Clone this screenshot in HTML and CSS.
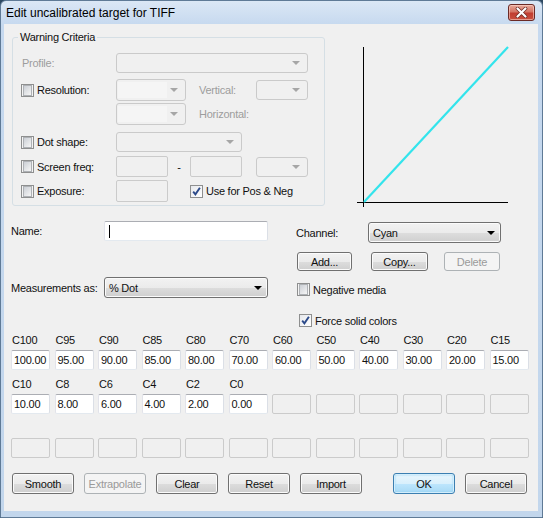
FILE: index.html
```html
<!DOCTYPE html>
<html>
<head>
<meta charset="utf-8">
<title>Edit uncalibrated target for TIFF</title>
<link rel="stylesheet" href="styles.css">
</head>
<body>
<div class="window">
  <div class="titlebar">
    <span class="title">Edit uncalibrated target for TIFF</span>
    <div class="close">
      <svg width="17" height="11" viewBox="0 0 17 11"><path d="M4.5 1.5 L12.5 9.5 M12.5 1.5 L4.5 9.5" stroke="#6a2620" stroke-width="3.6" stroke-linecap="round"/><path d="M4.5 1.5 L12.5 9.5 M12.5 1.5 L4.5 9.5" stroke="#ffffff" stroke-width="2.2" stroke-linecap="round"/></svg>
    </div>
  </div>
  <div class="client">
    <div class="top">
      <fieldset class="group">
        <legend>Warning Criteria</legend>
        <div class="row r1">
          <span class="lab dis plain">Profile:</span>
          <span class="combo w192"><i class="arr"></i></span>
        </div>
        <div class="row r2">
          <span class="lab"><span class="cb"></span><span class="cbt">Resolution:</span></span>
          <span class="combo ecombo w70"><span class="einner"></span><i class="arr"></i></span>
          <span class="sub dis">Vertical:</span>
          <span class="combo w52"><i class="arr"></i></span>
        </div>
        <div class="row r3">
          <span class="lab"></span>
          <span class="combo ecombo w70"><span class="einner"></span><i class="arr"></i></span>
          <span class="sub dis">Horizontal:</span>
        </div>
        <div class="row r4">
          <span class="lab"><span class="cb"></span><span class="cbt">Dot shape:</span></span>
          <span class="combo w126"><i class="arr"></i></span>
        </div>
        <div class="row r5">
          <span class="lab"><span class="cb"></span><span class="cbt">Screen freq:</span></span>
          <span class="dedit w52"></span>
          <span class="dash">-</span>
          <span class="dedit w52"></span>
          <span class="combo w52 gapl"><i class="arr"></i></span>
        </div>
        <div class="row r6">
          <span class="lab"><span class="cb"></span><span class="cbt">Exposure:</span></span>
          <span class="dedit w52"></span>
          <span class="cb checked posneg"><svg width="11" height="11" viewBox="0 0 11 11"><path d="M2.2 5.6 L4.4 8.3 L8.9 1.8" fill="none" stroke="#2c4a8a" stroke-width="1.9"/></svg></span>
          <span class="cbt">Use for Pos &amp; Neg</span>
        </div>
      </fieldset>
      <svg class="graph" width="170" height="167" viewBox="0 0 170 167">
        <line x1="13.5" y1="7" x2="13.5" y2="167" stroke="#000" stroke-width="1"/>
        <line x1="7" y1="162.5" x2="158" y2="162.5" stroke="#000" stroke-width="1"/>
        <line x1="14" y1="162" x2="158" y2="7" stroke="#33e4ec" stroke-width="2.2"/>
      </svg>
    </div>

    <div class="mid">
      <div class="midleft">
        <div class="frow">
          <span class="flab">Name:</span>
          <span class="edit w164"><span class="caret"></span></span>
        </div>
        <div class="frow meas">
          <span class="flab">Measurements as:</span>
          <span class="select w164"><span class="seltext">% Dot</span><i class="barr"></i></span>
        </div>
      </div>
      <div class="midright">
        <div class="frow">
          <span class="clab">Channel:</span>
          <span class="select w133"><span class="seltext">Cyan</span><i class="barr"></i></span>
        </div>
        <div class="brow">
          <span class="btn sm add">Add...</span>
          <span class="btn sm copy">Copy...</span>
          <span class="btn sm del disabled">Delete</span>
        </div>
        <div class="crow neg">
          <span class="cb"></span><span class="cbt">Negative media</span>
        </div>
        <div class="crow force">
          <span class="cb checked"><svg width="11" height="11" viewBox="0 0 11 11"><path d="M2.2 5.6 L4.4 8.3 L8.9 1.8" fill="none" stroke="#2c4a8a" stroke-width="1.9"/></svg></span><span class="cbt">Force solid colors</span>
        </div>
      </div>
    </div>

    <div class="grid">
      <div class="cell"><span class="cl">C100</span><span class="edit">100.00</span></div>
      <div class="cell"><span class="cl">C95</span><span class="edit">95.00</span></div>
      <div class="cell"><span class="cl">C90</span><span class="edit">90.00</span></div>
      <div class="cell"><span class="cl">C85</span><span class="edit">85.00</span></div>
      <div class="cell"><span class="cl">C80</span><span class="edit">80.00</span></div>
      <div class="cell"><span class="cl">C70</span><span class="edit">70.00</span></div>
      <div class="cell"><span class="cl">C60</span><span class="edit">60.00</span></div>
      <div class="cell"><span class="cl">C50</span><span class="edit">50.00</span></div>
      <div class="cell"><span class="cl">C40</span><span class="edit">40.00</span></div>
      <div class="cell"><span class="cl">C30</span><span class="edit">30.00</span></div>
      <div class="cell"><span class="cl">C20</span><span class="edit">20.00</span></div>
      <div class="cell"><span class="cl">C15</span><span class="edit">15.00</span></div>

      <div class="cell"><span class="cl">C10</span><span class="edit">10.00</span></div>
      <div class="cell"><span class="cl">C8</span><span class="edit">8.00</span></div>
      <div class="cell"><span class="cl">C6</span><span class="edit">6.00</span></div>
      <div class="cell"><span class="cl">C4</span><span class="edit">4.00</span></div>
      <div class="cell"><span class="cl">C2</span><span class="edit">2.00</span></div>
      <div class="cell"><span class="cl">C0</span><span class="edit">0.00</span></div>
      <div class="cell"><span class="cl"></span><span class="dedit"></span></div>
      <div class="cell"><span class="cl"></span><span class="dedit"></span></div>
      <div class="cell"><span class="cl"></span><span class="dedit"></span></div>
      <div class="cell"><span class="cl"></span><span class="dedit"></span></div>
      <div class="cell"><span class="cl"></span><span class="dedit"></span></div>
      <div class="cell"><span class="cl"></span><span class="dedit"></span></div>

      <div class="cell"><span class="cl"></span><span class="dedit"></span></div>
      <div class="cell"><span class="cl"></span><span class="dedit"></span></div>
      <div class="cell"><span class="cl"></span><span class="dedit"></span></div>
      <div class="cell"><span class="cl"></span><span class="dedit"></span></div>
      <div class="cell"><span class="cl"></span><span class="dedit"></span></div>
      <div class="cell"><span class="cl"></span><span class="dedit"></span></div>
      <div class="cell"><span class="cl"></span><span class="dedit"></span></div>
      <div class="cell"><span class="cl"></span><span class="dedit"></span></div>
      <div class="cell"><span class="cl"></span><span class="dedit"></span></div>
      <div class="cell"><span class="cl"></span><span class="dedit"></span></div>
      <div class="cell"><span class="cl"></span><span class="dedit"></span></div>
      <div class="cell"><span class="cl"></span><span class="dedit"></span></div>
    </div>

    <div class="btnrow">
      <span class="btn">Smooth</span>
      <span class="btn disabled">Extrapolate</span>
      <span class="btn">Clear</span>
      <span class="btn">Reset</span>
      <span class="btn">Import</span>
      <span class="btn ok">OK</span>
      <span class="btn">Cancel</span>
    </div>
  </div>
</div>
</body>
</html>
```
FILE: styles.css
```css
* { box-sizing: border-box; }
html, body { margin: 0; padding: 0; }
body {
  width: 543px; height: 518px; overflow: hidden;
  font-family: "Liberation Sans", Arial, sans-serif;
  font-size: 11px; color: #111; letter-spacing: -0.25px;
  background: #2f4a63;
}
.window {
  width: 543px; height: 518px;
  display: flex; flex-direction: column;
  padding: 0 4px 6px 3px;
  border: 1px solid #5f7a96;
  border-radius: 6px 6px 0 0;
  background: linear-gradient(#dbe7f5, #c6d9ef 24px, #c2d6ec);
}
.titlebar {
  height: 23px; flex: none;
  display: flex; align-items: flex-start; justify-content: space-between;
}
.title {
  font-size: 12px; letter-spacing: 0; line-height: 14px;
  margin: 5px 0 0 2px; color: #000;
}
.close {
  width: 27px; height: 17px; margin: 3px 3px 0 0;
  border: 1px solid #6b2a26; border-radius: 3px;
  background: linear-gradient(#e8a99b, #d47565 45%, #c13d30 55%, #c9503f);
  box-shadow: inset 0 0 0 1px rgba(255,220,210,0.55);
  display: flex; align-items: center; justify-content: center;
}
.client {
  flex: 1; background: #f0f0f0;
  padding: 7px 0 0 7px;
  display: flex; flex-direction: column;
}
.top { display: flex; height: 176px; flex: none; }
.group {
  margin: 0 0 0 1px; width: 313px; min-width: 0;
  border: 1px solid #d5dfe5; border-radius: 3px;
  padding: 9px 0 3px 8px;
  align-self: flex-start;
}
.group legend { padding: 0 2px; margin-left: -3px; line-height: 13px; }
.row { display: flex; align-items: center; }
.r1 { height: 20px; }
.r2 { height: 22px; margin-top: 6px; }
.r3 { height: 22px; margin-top: 2px; }
.r4 { height: 20px; margin-top: 7px; }
.r5 { height: 21px; margin-top: 4px; }
.r6 { height: 22px; margin-top: 3px; }
.lab { width: 95px; flex: none; display: flex; align-items: center; }
.lab.plain { padding-left: 1px; }
.dis { color: #9d9d9d; }
.sub { margin-left: 13px; width: 57px; flex: none; }
.cb {
  width: 13px; height: 13px; flex: none;
  border: 1px solid #8e8f8f; background: #f4f4f4; padding: 1px;
  display: inline-flex; align-items: center; justify-content: center;
}
.cb::before {
  content: ""; display: block; width: 9px; height: 9px;
  border: 1px solid #aeb1b5;
  background: linear-gradient(135deg, #cbcfd5, #f6f6f6);
}
.cb.checked { padding: 0; background: linear-gradient(135deg, #e6e8ec, #ffffff); }
.cb.checked::before { display: none; }
.cbt { margin-left: 3px; white-space: nowrap; }
.posneg { margin-left: 22px; }
.posneg + .cbt { margin-left: 3px; }

.combo {
  height: 20px; flex: none; position: relative;
  border: 1px solid #cacaca; border-radius: 3px; background: #f0f0f0;
  display: flex; align-items: center; justify-content: flex-end;
}
.combo.ecombo { height: 22px; justify-content: space-between; padding-left: 1px; }
.einner { width: 49px; height: 16px; background: #f5f5f5; }
.arr {
  width: 0; height: 0; margin-right: 7px;
  border-left: 4px solid transparent; border-right: 4px solid transparent;
  border-top: 4px solid #a6a6a6;
}
.w192 { width: 192px; }
.w126 { width: 126px; }
.w70 { width: 70px; }
.w52 { width: 52px; }
.w164 { width: 164px; }
.w133 { width: 133px; }
.gapl { margin-left: 14px; }
.dash { width: 22px; text-align: center; flex: none; }
.dedit {
  height: 20px; flex: none;
  border: 1px solid #cbcbcb; border-radius: 2px; background: #f0f0f0;
}
.r5 .dedit { height: 21px; }
.r6 .dedit { height: 22px; }

.graph { margin: 9px 0 0 25px; flex: none; }

.mid { display: flex; flex: none; }
.midleft { width: 257px; padding-top: 14px; flex: none; }
.midright { width: 206px; margin-left: 28px; padding-top: 15px; flex: none; }
.frow { display: flex; align-items: center; }
.meas { margin-top: 36px; }
.flab { width: 93px; flex: none; }
.clab { width: 72px; flex: none; }
.edit {
  height: 20px; display: flex; align-items: center; padding-left: 2px;
  background: #fff; border: 1px solid; border-radius: 2px;
  border-color: #abadb3 #dbdfe6 #e3e9ef #e2e3ea;
  white-space: nowrap; overflow: hidden;
}
.caret { width: 1px; height: 13px; background: #000; margin-left: 2px; }
.select {
  height: 21px; flex: none; display: flex; align-items: center; justify-content: space-between;
  border: 1px solid #707070; border-radius: 3px;
  background: linear-gradient(#f2f2f2, #ebebeb 50%, #dddddd 51%, #cfcfcf);
  box-shadow: inset 0 0 0 1px #fbfbfb;
  padding-left: 4px;
}
.barr {
  width: 0; height: 0; margin-right: 5px;
  border-left: 4px solid transparent; border-right: 4px solid transparent;
  border-top: 4px solid #000;
}
.brow { display: flex; margin-top: 9px; }
.btn {
  height: 21px; width: 62px; flex: none;
  display: flex; align-items: center; justify-content: center;
  border: 1px solid #707070; border-radius: 3px;
  background: linear-gradient(#f2f2f2, #ebebeb 50%, #dddddd 51%, #cfcfcf);
  box-shadow: inset 0 0 0 1px #fbfbfb;
  white-space: nowrap;
}
.btn.sm { height: 19px; }
.add { width: 55px; margin-left: 1px; }
.copy { width: 57px; margin-left: 19px; }
.del { width: 56px; margin-left: 16px; }
.btn.disabled {
  border-color: #adb2b5; background: #f4f4f4; box-shadow: none; color: #9a9a9a;
}
.btn.ok {
  margin-left: 21px;
  border-color: #3c7fb1;
  background: linear-gradient(#eaf6fd, #d9f0fc 50%, #bee6fd 51%, #a7d9f5);
  box-shadow: inset 0 0 0 1px #d3eefc, inset 0 0 2px 1px #8fd1f3;
}
.crow { display: flex; align-items: center; height: 13px; }
.neg { margin-top: 12px; padding-left: 1px; }
.force { margin-top: 18px; padding-left: 3px; }

.grid {
  display: grid; grid-template-columns: repeat(12, 39px);
  column-gap: 4.5px; row-gap: 8px; margin-top: 7px; flex: none;
}
.cell { display: flex; flex-direction: column; gap: 3px; }
.cl { height: 13px; line-height: 13px; padding-left: 1px; }
.btnrow { display: flex; gap: 10px; margin-top: 15px; padding-left: 1px; flex: none; }
```
